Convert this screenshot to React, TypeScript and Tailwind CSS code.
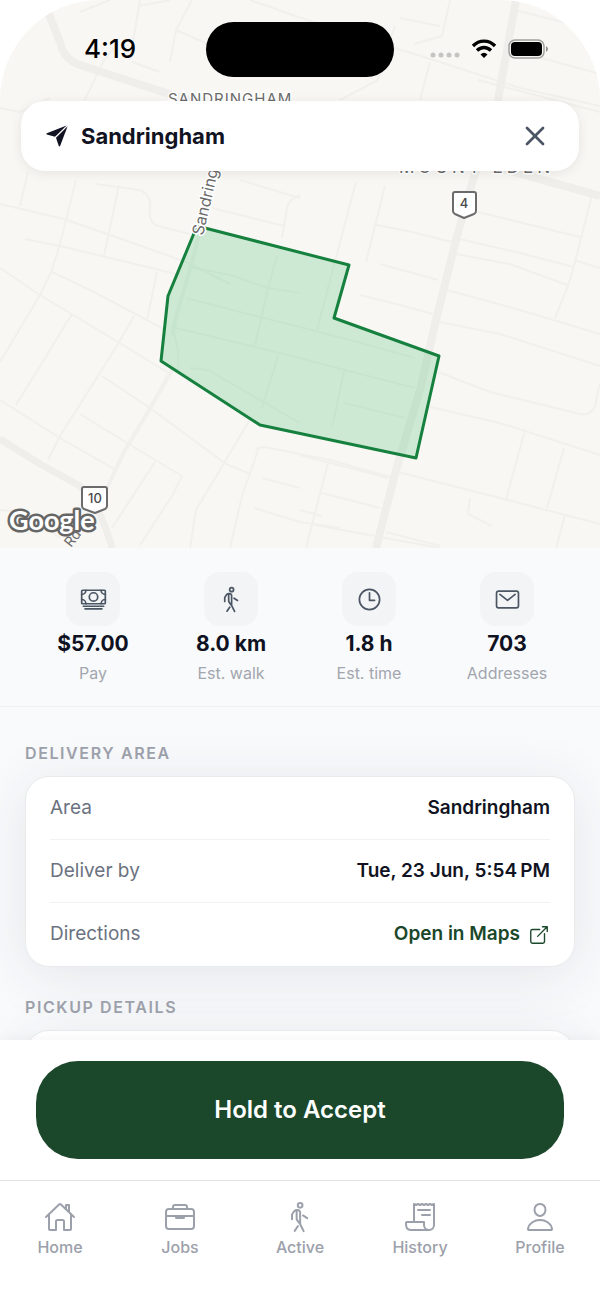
import {
  IoCashOutline,
  IoWalkOutline,
  IoTimeOutline,
  IoMailOutline,
  IoOpenOutline,
  IoHomeOutline,
  IoBriefcaseOutline,
  IoReceiptOutline,
  IoPersonOutline,
} from "react-icons/io5";
import { X } from "lucide-react";
import type { ReactNode } from "react";
import type { IconType } from "react-icons";

const minorRoads = [
  "M0 204 L64 219 L130 242 L186 262 L230 284",
  "M76 180 L60 244 L52 270 L40 295 L0 362",
  "M119 185 L104 256",
  "M25 239 L60 246 L160 270 L180 275",
  "M0 268 L40 295 L118 342 L170 374",
  "M52 272 L90 290 L147 320 L165 330",
  "M157 272 L147 320",
  "M72 314 L16 405",
  "M134 316 L118 344 L60 436 L48 460",
  "M0 400 L60 438 L116 470",
  "M80 414 L132 446 L182 476 L172 496 L140 545",
  "M102 376 L150 408 L226 464 L250 474",
  "M155 462 L112 528",
  "M252 416 L214 480 L196 510 L190 548",
  "M256 450 Q260 446 270 448 L330 460 L390 477",
  "M258 450 L242 496 L230 548",
  "M262 478 L300 488",
  "M254 508 L300 522 L340 528",
  "M0 510 L26 512 L60 538",
  "M96 184 L140 190 Q152 196 150 208 Q148 222 158 226 L190 234",
  "M212 208 L284 226",
  "M300 195 Q286 200 286 214 L282 238",
  "M240 180 L300 198",
  "M190 267 L230 275 L268 288 L300 293",
  "M186 298 L240 312 L300 327 L350 340 L415 358",
  "M176 328 L230 341 L300 358 L337 368 L415 388",
  "M277 256 L268 288 L255 345",
  "M278 356 L262 408",
  "M173 330 Q180 350 178 370 M190 368 L208 370 L300 423",
  "M344 371 L332 428",
  "M345 403 L405 418",
  "M356 182 L337 254 L317 330",
  "M385 186 L366 262",
  "M376 225 L408 231 L452 242",
  "M380 264 L438 280",
  "M360 295 L400 305 L440 316",
  "M455 238 L520 253 L574 267",
  "M455 254 L510 264 L567 285",
  "M478 212 L580 237",
  "M447 290 L520 310 L600 334",
  "M440 322 L500 334 L600 366",
  "M592 195 L574 266 L568 286 L555 318",
  "M574 260 L600 268",
  "M438 372 L490 392 L580 414 Q596 416 597 396 L600 384",
  "M430 407 L500 423 L600 455",
  "M525 430 L506 500",
  "M564 448 L547 508",
  "M300 455 L388 478 M398 472 L500 498 L600 524",
  "M328 463 L306 548",
  "M322 493 L380 508",
  "M315 525 L440 548",
  "M386 532 L440 546",
  "M565 515 L556 548",
  "M470 498 L468 514 L492 526",
  "M300 510 L322 516",
  "M110 0 L80 12 M170 0 L138 6 M192 0 L176 30 L170 62",
  "M176 30 L208 44 M80 110 L104 60 L118 44",
  "M0 108 L20 112 L50 98",
  "M160 72 L132 62 M140 0 L130 60",
  "M250 0 L330 28 L440 62 L520 88 L600 106",
  "M395 26 L386 52 L378 80 L340 100",
  "M450 0 L442 36 L414 44 M400 18 L440 26",
  "M520 52 L600 74 M515 10 L570 24",
  "M478 80 L600 112",
  "M430 62 L420 100",
  "M28 172 L20 206",
];

function StreetMap() {
  return (
    <svg
      className="absolute inset-0 size-full"
      viewBox="0 0 600 548"
      preserveAspectRatio="xMidYMin slice"
      fontFamily="Inter, sans-serif"
      role="img"
      aria-label="Map of the Sandringham delivery area"
    >
      <g fill="none" stroke="#f1f0ed" strokeLinejoin="round">
        <g strokeWidth="2">
          {minorRoads.map((d) => (
            <path key={d} d={d} />
          ))}
        </g>
        <path d="M172 370 L148 412 L124 452 L106 490" strokeWidth="4" />
        <path d="M213 178 L190 270 L178 310 L172 335" strokeWidth="4" />
        <g stroke="#efeeeb">
          <path d="M48 12 L60 42 Q64 60 80 65 L120 78 L200 104 L300 124 L400 146 L500 168 L600 196" strokeWidth="8" />
          <path d="M516 0 L498 100 L470 190 L456 240 L436 320 L420 390 L396 470 L376 548" strokeWidth="8" />
          <path d="M0 439 L40 464 L80 486 Q100 505 112 548" strokeWidth="7" />
        </g>
      </g>
      <path
        d="M197 226 L349 265 L334 318 L439 356 L416 458 L260 425 L161 361 L168 296 Z"
        fill="#22b455"
        fillOpacity="0.2"
        stroke="#16803f"
        strokeWidth="3"
        strokeLinejoin="round"
      />
      <g fill="#6b6b6b" stroke="#ffffff" strokeWidth="3" paintOrder="stroke">
        <text x="168" y="104" fontSize="15" letterSpacing="1">SANDRINGHAM</text>
        <text x="399" y="173" fontSize="17" letterSpacing="4">MOUNT EDEN</text>
        <text transform="translate(203 236) rotate(-77)" fontSize="16">Sandringham Rd</text>
      </g>
      <g fill="#ffffff" stroke="#6b6b6b" strokeWidth="2" strokeLinejoin="round">
        <path d="M455 192 H474 Q476 192 476 194 V211 Q476 213 474 214 L464 218 L455 214 Q453 213 453 211 V194 Q453 192 455 192 Z" />
        <path d="M84 487 H105 Q107 487 107 489 V506 Q107 508 105 509 L95 513 L84 509 Q82 508 82 506 V489 Q82 487 84 487 Z" />
      </g>
      <g fill="#4a4a4a" fontSize="13" fontWeight="500" textAnchor="middle">
        <text x="464" y="208">4</text>
        <text x="95" y="503">10</text>
      </g>
      <text
        x="9"
        y="530"
        fontFamily="Lato, sans-serif"
        fontSize="27"
        fontWeight="700"
        fill="#ffffff"
        stroke="#666666"
        strokeWidth="5"
        strokeLinejoin="round"
        paintOrder="stroke"
      >
        Google
      </text>
      <text transform="translate(71 548) rotate(-52)" fontSize="14" fill="#6b6b6b">Rd</text>
    </svg>
  );
}

function StatusBar() {
  return (
    <div className="relative grid grid-cols-[1fr_auto_1fr] items-center pt-[21px]">
      <time className="pl-21 text-[26px] leading-14 font-medium text-black">4:19</time>
      <div className="h-[55px] w-47 rounded-full bg-black" />
      <div className="flex items-center gap-3 pl-9">
        <svg width="30" height="20" viewBox="0 0 30 20" aria-hidden="true" fill="#c4c4c2">
          <circle cx="3" cy="16" r="2.5" />
          <circle cx="11" cy="16" r="2.5" />
          <circle cx="19" cy="16" r="2.5" />
          <circle cx="27" cy="16" r="2.5" />
        </svg>
        <svg width="24" height="20" viewBox="0 0 24 20" aria-label="Wi-Fi" role="img">
          <g fill="none" stroke="#000000" strokeWidth="3.4">
            <path d="M1 7 C7 0.500 17 0.500 23 7" />
            <path d="M5 11.500 C9 7.500 15 7.500 19 11.500" />
          </g>
          <path d="M8.500 15.500 Q12 12 15.500 15.500 L12 19 Z" fill="#000000" />
        </svg>
        <svg width="41" height="20" viewBox="0 0 41 20" aria-label="Battery full" role="img">
          <rect x="1" y="1" width="35" height="18" rx="6" fill="none" stroke="#a0a09e" strokeWidth="1.500" />
          <rect x="3" y="3" width="31" height="14" rx="4" fill="#000000" />
          <path d="M38 7 Q42 10 38 13 Z" fill="#8e8e8c" />
        </svg>
      </div>
    </div>
  );
}

function Stat({ icon: Icon, value, label }: { icon: IconType; value: string; label: string }) {
  return (
    <div className="flex flex-1 flex-col items-center">
      <div className="flex size-[54px] items-center justify-center rounded-2xl bg-[#f3f4f6] text-[#4b5563]">
        <Icon size={27} />
      </div>
      <dd className="mt-0.5 text-[21px] leading-8 font-bold text-[#0f1222]">{value}</dd>
      <dt className="text-base leading-[26px] text-[#a2a6ae]">{label}</dt>
    </div>
  );
}

function DetailRow({ label, children }: { label: string; children: ReactNode }) {
  return (
    <div className="flex h-[63px] items-center justify-between border-b border-[#f1f2f4] text-[19px] last:border-0">
      <dt className="text-[#6b7280]">{label}</dt>
      <dd className="font-semibold text-[#111322]">{children}</dd>
    </div>
  );
}

const stats = [
  { icon: IoCashOutline, value: "$57.00", label: "Pay" },
  { icon: IoWalkOutline, value: "8.0 km", label: "Est. walk" },
  { icon: IoTimeOutline, value: "1.8 h", label: "Est. time" },
  { icon: IoMailOutline, value: "703", label: "Addresses" },
];

const tabs = [
  { icon: IoHomeOutline, label: "Home" },
  { icon: IoBriefcaseOutline, label: "Jobs" },
  { icon: IoWalkOutline, label: "Active" },
  { icon: IoReceiptOutline, label: "History" },
  { icon: IoPersonOutline, label: "Profile" },
];

const card = "mt-[11px] rounded-3xl border border-[#e8eaec] bg-white shadow-[0_8px_56px_rgba(30,50,60,0.10)]";
const heading = "text-base leading-6 font-semibold tracking-widest text-[#9ca0aa]";

export default function App() {
  return (
    <div className="flex h-screen flex-col bg-white font-['Inter',sans-serif]">
      <main className="min-h-0 flex-1 overflow-hidden bg-[#f9fafc]">
        <div className="bg-white">
          <header className="relative h-[548px] overflow-hidden rounded-t-[100px] bg-[#f8f7f3]">
            <StreetMap />
            <StatusBar />
            <div className="relative mx-[21px] mt-6 flex h-[70px] items-center rounded-3xl bg-white pr-7 pl-6 shadow-[0_2px_12px_rgba(0,0,0,0.08)]">
              <svg width="24" height="24" viewBox="0 0 24 24" fill="#111322" aria-hidden="true">
                <path d="M22.600 2.200 L15.200 21.800 Q14.500 23 13.700 21.800 L11 13.800 Z" />
                <path d="M21.600 1.400 L1.800 9.200 Q0.800 9.900 1.800 10.600 L10 12.800 Z" />
              </svg>
              <h1 className="ml-3 flex-1 text-[22px] leading-8 font-bold text-[#111322]">Sandringham</h1>
              <button type="button" aria-label="Close" className="text-[#4b5563]">
                <X size={32} strokeWidth={2} />
              </button>
            </div>
          </header>
        </div>
        <dl className="flex border-b border-[#eef0f2] px-6 pt-6 pb-5">
          {stats.map((s) => (
            <Stat key={s.label} {...s} />
          ))}
        </dl>
        <section className="px-[25px] pt-[34px]">
          <h2 className={heading}>DELIVERY AREA</h2>
          <dl className={`${card} px-6`}>
            <DetailRow label="Area">Sandringham</DetailRow>
            <DetailRow label="Deliver by">Tue, 23 Jun, 5:54&#8239;PM</DetailRow>
            <DetailRow label="Directions">
              <a href="#maps" className="flex items-center gap-2 text-[#1b472b]">
                Open in Maps
                <IoOpenOutline size={22} />
              </a>
            </DetailRow>
          </dl>
        </section>
        <section className="relative px-[25px] pt-7">
          <h2 className={heading}>PICKUP DETAILS</h2>
          <div className={`${card} h-48`} />
        </section>
      </main>
      <div className="relative bg-white px-9 py-[21px] shadow-[0_-2px_12px_rgba(0,0,0,0.04)]">
        <button
          type="button"
          className="block h-[98px] w-full rounded-[42px] bg-[#1b472b] text-2xl font-semibold text-white"
        >
          Hold to Accept
        </button>
      </div>
      <nav className="relative flex border-t border-[#e2e3e5] bg-white pt-5 pb-[47px]">
        {tabs.map(({ icon: Icon, label }) => (
          <a key={label} href={`#${label.toLowerCase()}`} className="flex flex-1 flex-col items-center gap-1 text-[#9ca0aa]">
            <Icon size={32} />
            <span className="text-base leading-5 font-medium">{label}</span>
          </a>
        ))}
      </nav>
    </div>
  );
}
